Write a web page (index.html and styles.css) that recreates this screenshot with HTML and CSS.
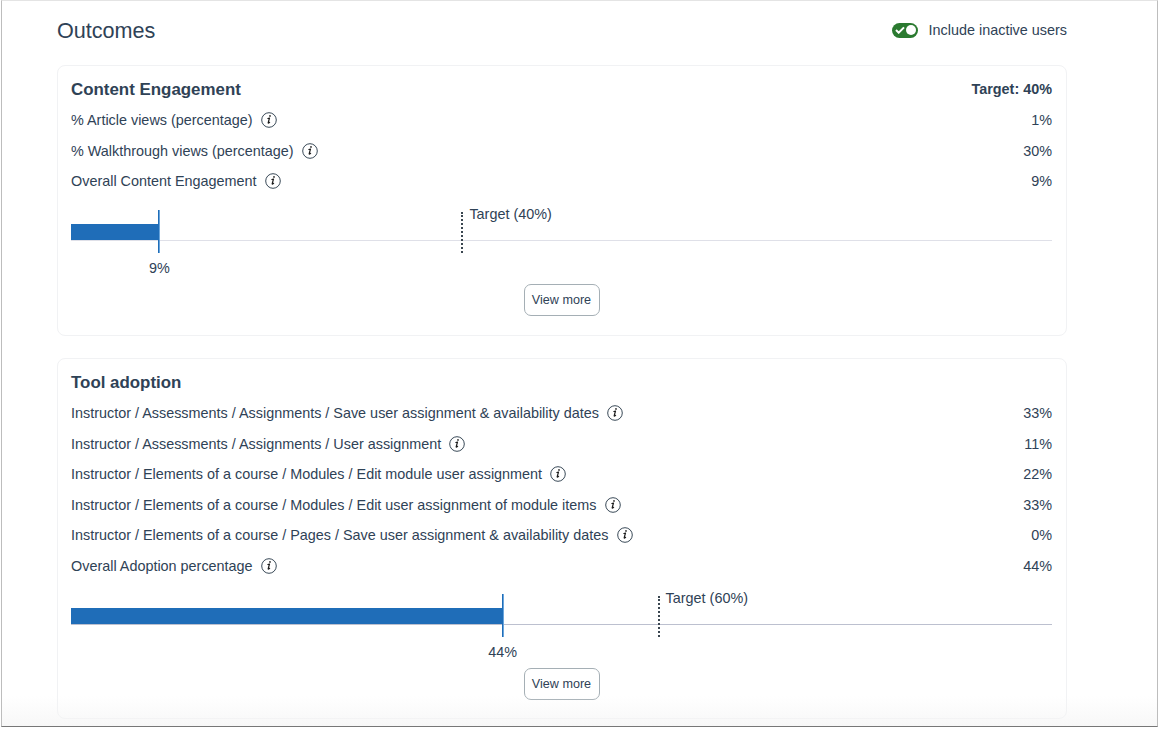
FILE: index.html
```html
<!DOCTYPE html>
<html lang="en">
<head>
<meta charset="utf-8">
<title>Outcomes</title>
<link rel="stylesheet" href="styles.css">
</head>
<body>
<svg class="defs" width="0" height="0" aria-hidden="true">
  <symbol id="info" viewBox="0 0 16 16">
    <circle cx="8" cy="8" r="7.3" fill="none" stroke="#3a4a58" stroke-width="1"/>
    <path d="M6.9 6.5l1.6-.5-1.3 4.6c-.1.5.2.6.5.4l.9-.7" fill="none" stroke="#1c1c1c" stroke-width="1.2" stroke-linecap="round" stroke-linejoin="round"/>
    <circle cx="9" cy="3.9" r=".85" fill="#1c1c1c"/>
  </symbol>
</svg>
<div class="window">
  <header class="top">
    <h1 class="page-title">Outcomes</h1>
    <div class="toggle-wrap">
      <span class="toggle">
        <svg class="check" width="10" height="8" viewBox="0 0 10 8"><path d="M1 4l2.7 2.7L9 1.4" fill="none" stroke="#fff" stroke-width="2"/></svg>
        <span class="knob"></span>
      </span>
      <span class="toggle-label">Include inactive users</span>
    </div>
  </header>

  <section class="card card-first">
    <div class="card-head"><h2>Content Engagement</h2><strong>Target: 40%</strong></div>
    <div class="row"><span class="name">% Article views (percentage)<svg class="info"><use href="#info"/></svg></span><span>1%</span></div>
    <div class="row"><span class="name">% Walkthrough views (percentage)<svg class="info"><use href="#info"/></svg></span><span>30%</span></div>
    <div class="row"><span class="name">Overall Content Engagement<svg class="info"><use href="#info"/></svg></span><span>9%</span></div>
    <div class="chart">
      <div class="track"></div>
      <div class="bar" style="width:9%"></div>
      <div class="value" style="left:9%"><span>9%</span></div>
      <div class="target" style="left:40%"><span>Target (40%)</span></div>
    </div>
    <div class="actions"><button class="btn">View more</button></div>
  </section>

  <section class="card card-second">
    <div class="card-head"><h2>Tool adoption</h2></div>
    <div class="row"><span class="name">Instructor / Assessments / Assignments / Save user assignment &amp; availability dates<svg class="info"><use href="#info"/></svg></span><span>33%</span></div>
    <div class="row"><span class="name">Instructor / Assessments / Assignments / User assignment<svg class="info"><use href="#info"/></svg></span><span>11%</span></div>
    <div class="row"><span class="name">Instructor / Elements of a course / Modules / Edit module user assignment<svg class="info"><use href="#info"/></svg></span><span>22%</span></div>
    <div class="row"><span class="name">Instructor / Elements of a course / Modules / Edit user assignment of module items<svg class="info"><use href="#info"/></svg></span><span>33%</span></div>
    <div class="row"><span class="name">Instructor / Elements of a course / Pages / Save user assignment &amp; availability dates<svg class="info"><use href="#info"/></svg></span><span>0%</span></div>
    <div class="row"><span class="name">Overall Adoption percentage<svg class="info"><use href="#info"/></svg></span><span>44%</span></div>
    <div class="chart">
      <div class="track track-dark"></div>
      <div class="bar" style="width:44%"></div>
      <div class="value" style="left:44%"><span>44%</span></div>
      <div class="target" style="left:60%"><span>Target (60%)</span></div>
    </div>
    <div class="actions"><button class="btn">View more</button></div>
  </section>
  <div class="fade"></div>
</div>
</body>
</html>
```
FILE: styles.css
```css
* { box-sizing: border-box; }
html, body { margin: 0; height: 100%; background: #fff; overflow: hidden; }
body {
  font-family: "Liberation Sans", Arial, sans-serif;
  font-size: 14.4px;
  color: #2f4256;
}
.defs { position: absolute; }
.window {
  position: relative;
  width: 1157px;
  height: 727px;
  margin-left: 1px;
  padding: 0 90px 0 55px;
  background: #fff;
  border-top: 1px solid #e4e4e4;
  border-left: 1px solid #bdbdbd;
  border-right: 1px solid #bdbdbd;
  border-bottom: 1px solid #777;
  overflow: hidden;
}
.top {
  height: 64px;
  display: flex;
  justify-content: space-between;
  align-items: flex-start;
  padding-top: 17px;
}
.page-title {
  margin: 0;
  font-size: 21.6px;
  line-height: 25px;
  font-weight: 400;
}
.toggle-wrap {
  display: flex;
  align-items: center;
  gap: 11px;
  height: 24px;
}
.toggle {
  width: 26px;
  height: 15px;
  border-radius: 8px;
  background: #2b7a30;
  display: flex;
  align-items: center;
  justify-content: space-between;
  padding: 0 2px 0 3px;
}
.check { display: block; }
.knob {
  width: 10px;
  height: 10px;
  border-radius: 50%;
  background: #fff;
}
.card {
  border: 1px solid #f1f2f4;
  border-radius: 8px;
  padding: 0 14px 0 13px;
  background: #fff;
}
.card-first { height: 271px; margin-bottom: 22px; }
.card-second { height: 361px; }
.card-second .chart { margin-top: 12.4px; }
.card-head {
  display: flex;
  justify-content: space-between;
  align-items: center;
  height: 38.7px;
  padding-top: 9px;
}
.card-head h2 {
  margin: 0;
  font-size: 16.9px;
  font-weight: 700;
}
.card-head strong { font-size: 14.4px; padding-bottom: 1px; }
.row {
  display: flex;
  justify-content: space-between;
  align-items: center;
  height: 30.6px;
}
.name { display: flex; align-items: center; }
.info {
  width: 16px;
  height: 16px;
  margin-left: 8px;
}
.chart {
  position: relative;
  height: 74px;
  margin-top: 13.3px;
}
.track {
  position: absolute;
  left: 0;
  right: 0;
  top: 30px;
  height: 1px;
  background: #dfe0e8;
}
.track-dark { background: #bcc0cf; }
.bar {
  position: absolute;
  left: 0;
  top: 14px;
  height: 16px;
  background: #1f6db8;
}
.value {
  position: absolute;
  top: 0;
  width: 1px;
  height: 43px;
  margin-left: -1px;
  background: #1f6db8;
  box-shadow: 1px 0 0 #6aa5dc;
}
.value span {
  position: absolute;
  top: 50px;
  left: 1px;
  transform: translateX(-50%);
  line-height: 16px;
  white-space: nowrap;
}
.target {
  position: absolute;
  top: 2px;
  height: 41px;
  margin-left: -2px;
  border-left: 2px dotted #3a4650;
}
.target span {
  position: absolute;
  left: 6px;
  top: -6px;
  line-height: 16px;
  white-space: nowrap;
}
.actions { display: flex; justify-content: center; }
.btn {
  width: 76px;
  height: 32px;
  padding: 0;
  border: 1px solid #a5afb5;
  border-radius: 7px;
  background: #fff;
  color: #2f4256;
  font-family: inherit;
  font-size: 12.6px;
}
.fade {
  position: absolute;
  left: 0;
  right: 0;
  bottom: 0;
  height: 30px;
  background: linear-gradient(to bottom, rgba(245,245,245,0), rgba(245,245,245,.75));
  pointer-events: none;
}
```
